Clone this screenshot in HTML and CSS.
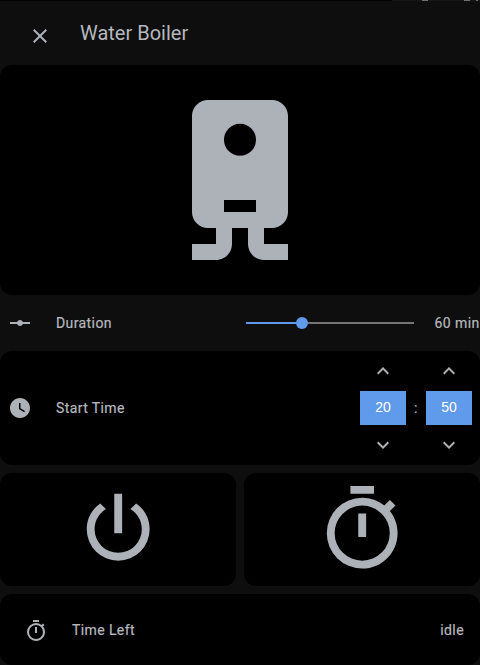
FILE: index.html
```html
<!DOCTYPE html>
<html lang="en">
<head>
<meta charset="utf-8">
<title>Water Boiler</title>
<link rel="stylesheet" href="styles.css">
</head>
<body>
<main class="dialog">
  <div class="top-edge"><i></i><i></i><i></i></div>
  <header class="header">
    <svg class="icon close" viewBox="0 0 24 24"><path d="M19,6.41L17.59,5L12,10.59L6.41,5L5,6.41L10.59,12L5,17.59L6.41,19L12,13.41L17.59,19L19,17.59L13.41,12L19,6.41Z"/></svg>
    <h1 class="title">Water Boiler</h1>
  </header>
  <section class="card hero">
    <svg class="icon hero-icon" viewBox="0 0 24 24"><path fill-rule="evenodd" d="M8 2C6.89 2 6 2.89 6 4V16C6 17.11 6.89 18 8 18H9V20H6V22H9C10.11 22 11 21.11 11 20V18H13V20C13 21.11 13.89 22 15 22H18V20H15V18H16C17.11 18 18 17.11 18 16V4C18 2.89 17.11 2 16 2H8M12 4.97A2 2 0 0 1 14 6.97A2 2 0 0 1 12 8.97A2 2 0 0 1 10 6.97A2 2 0 0 1 12 4.97M10 14.5H14V16H10V14.5Z"/></svg>
  </section>
  <section class="row duration">
    <svg class="icon" viewBox="0 0 24 24"><path d="M2,11H9.17C9.58,9.83 10.69,9 12,9C13.31,9 14.42,9.83 14.83,11H22V13H14.83C14.42,14.17 13.31,15 12,15C10.69,15 9.58,14.17 9.17,13H2V11Z"/></svg>
    <span class="label">Duration</span>
    <div class="slider"><div class="slider-fill"></div><div class="slider-knob"></div><div class="slider-rest"></div></div>
    <span class="duration-value">60 min</span>
  </section>
  <section class="card row start">
    <svg class="icon" viewBox="0 0 24 24"><path fill-rule="evenodd" d="M12 2C6.5 2 2 6.5 2 12C2 17.5 6.5 22 12 22C17.5 22 22 17.5 22 12S17.5 2 12 2M16.2 16.2L11 13V7H12.5V12.2L17 14.9L16.2 16.2Z"/></svg>
    <span class="label">Start Time</span>
    <div class="time">
      <div class="unit">
        <svg class="icon" viewBox="0 0 24 24"><path d="M7.41,15.41L12,10.83L16.59,15.41L18,14L12,8L6,14L7.41,15.41Z"/></svg>
        <span class="digits">20</span>
        <svg class="icon" viewBox="0 0 24 24"><path d="M7.41,8.58L12,13.17L16.59,8.58L18,10L12,16L6,10L7.41,8.58Z"/></svg>
      </div>
      <span class="colon">:</span>
      <div class="unit">
        <svg class="icon" viewBox="0 0 24 24"><path d="M7.41,15.41L12,10.83L16.59,15.41L18,14L12,8L6,14L7.41,15.41Z"/></svg>
        <span class="digits">50</span>
        <svg class="icon" viewBox="0 0 24 24"><path d="M7.41,8.58L12,13.17L16.59,8.58L18,10L12,16L6,10L7.41,8.58Z"/></svg>
      </div>
    </div>
  </section>
  <section class="buttons">
    <div class="card button"><svg class="icon button-icon" viewBox="0 0 24 24"><path d="M16.56,5.44L15.11,6.89C16.84,7.94 18,9.83 18,12A6,6 0 0,1 12,18A6,6 0 0,1 6,12C6,9.83 7.16,7.94 8.88,6.88L7.44,5.44C5.36,6.88 4,9.28 4,12A8,8 0 0,0 12,20A8,8 0 0,0 20,12C20,9.28 18.64,6.88 16.56,5.44M13,3H11V13H13"/></svg></div>
    <div class="card button"><svg class="icon button-icon" viewBox="0 0 24 24"><path d="M12,20A7,7 0 0,1 5,13A7,7 0 0,1 12,6A7,7 0 0,1 19,13A7,7 0 0,1 12,20M19.03,7.39L20.45,5.97C20,5.46 19.55,5 19.04,4.56L17.62,6C16.07,4.74 14.12,4 12,4A9,9 0 0,0 3,13A9,9 0 0,0 12,22C17,22 21,17.97 21,13C21,10.88 20.26,8.93 19.03,7.39M11,14H13V8H11M15,1H9V3H15V1Z"/></svg></div>
  </section>
  <section class="card row left">
    <svg class="icon" viewBox="0 0 24 24"><path d="M12,20A7,7 0 0,1 5,13A7,7 0 0,1 12,6A7,7 0 0,1 19,13A7,7 0 0,1 12,20M19.03,7.39L20.45,5.97C20,5.46 19.55,5 19.04,4.56L17.62,6C16.07,4.74 14.12,4 12,4A9,9 0 0,0 3,13A9,9 0 0,0 12,22C17,22 21,17.97 21,13C21,10.88 20.26,8.93 19.03,7.39M11,14H13V8H11M15,1H9V3H15V1Z"/></svg>
    <span class="label">Time Left</span>
    <span class="state">idle</span>
  </section>
</main>
</body>
</html>
```
FILE: styles.css
```css
* { box-sizing: border-box; }
body {
  margin: 0;
  background: #0e0e0e;
  color: #b5b8bd;
  font: 400 14px/20px Roboto, sans-serif;
  letter-spacing: 0.4px;
  -webkit-text-stroke: 0.2px currentColor;
}
.dialog { width: 480px; height: 665px; overflow: hidden; }
.icon { display: block; flex: none; width: 24px; height: 24px; fill: #adb1b8; }
.card { background: #000; border-radius: 12px; }
.row { display: flex; align-items: center; }
.label { margin-left: 24px; white-space: nowrap; }

.top-edge {
  display: flex;
  height: 1px;
  padding-left: 422px;
  background: linear-gradient(to right, #000 392px, #151617 392px);
}
.top-edge i { width: 6px; margin-right: 36px; background: #6b7075; }
.top-edge i:nth-child(2) { margin-right: 6px; }
.top-edge i:nth-child(3) { width: 2px; margin-right: 0; }

.header { display: flex; height: 64px; padding: 20px 28px 0; }
.close { margin-top: 3px; }
.title {
  margin: 0 0 0 28px;
  font-size: 20px;
  line-height: 24px;
  font-weight: 400;
  letter-spacing: 0;
  -webkit-text-stroke: 0;
}

.hero { display: grid; place-items: center; height: 230px; }
.hero-icon { width: 192px; height: 192px; }

.duration { height: 56px; padding-left: 8px; }
.duration .label { width: 190px; }
.slider { display: flex; align-items: center; width: 168px; }
.slider-fill { width: 50px; height: 2px; background: #609beb; }
.slider-knob { width: 12px; height: 12px; border-radius: 50%; background: #609beb; }
.slider-rest { flex: 1; height: 2px; background: #747575; }
.duration-value { width: 45px; margin-left: 20.6px; white-space: nowrap; }

.start { height: 114px; padding: 0 8px; }
.time { display: flex; align-items: center; margin-left: auto; }
.unit { display: flex; flex-direction: column; align-items: center; width: 46px; gap: 8px; }
.digits {
  width: 46px;
  height: 34px;
  background: #609beb;
  color: #fff;
  font-family: "Liberation Sans", sans-serif;
  line-height: 33px;
  text-align: center;
  letter-spacing: 0;
  -webkit-text-stroke: 0;
}
.colon { width: 20px; text-align: center; }

.buttons { display: flex; gap: 8px; margin: 8px 0; }
.button { display: grid; place-items: center; flex: 1; height: 113px; }
.button-icon { width: 94.4px; height: 94.4px; }

.left { height: 71px; padding: 0 16px 0 24px; }
.left .icon { margin-top: 2px; }
.state { margin-left: auto; }
```
